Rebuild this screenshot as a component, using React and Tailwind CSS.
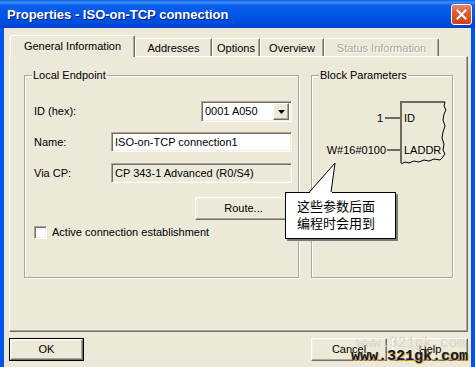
import { useState } from 'react'

const raised =
  'border border-t-white border-l-white border-r-[#716f64] border-b-[#716f64] shadow-[inset_-1px_-1px_0_#aca899,inset_1px_1px_0_#f1efe2]'
const sunken =
  'border border-t-[#aca899] border-l-[#aca899] border-r-white border-b-white shadow-[inset_1px_1px_0_#716f64,inset_-1px_-1px_0_#f1efe2]'
const etched = 'border border-[#aca899] shadow-[inset_1px_1px_0_#fff,1px_1px_0_#fff]'

function Tab({ label, width, active, disabled }) {
  if (active) {
    return (
      <div
        className={`relative z-10 h-[22px] -mb-px bg-[#ece9d8] border-l border-t border-r border-l-white border-t-white border-r-[#716f64] shadow-[inset_-1px_0_0_#aca899] rounded-t-[2px] flex justify-center pt-[4px] ${width}`}
      >
        {label}
      </div>
    )
  }
  return (
    <div
      className={`h-[18px] border-l border-t border-r border-l-white border-t-white border-r-[#716f64] shadow-[inset_-1px_0_0_#aca899] rounded-t-[2px] flex justify-center pt-[3px] ${width} ${
        disabled ? 'text-[#aca899] [text-shadow:1px_1px_0_#fff]' : ''
      }`}
    >
      {label}
    </div>
  )
}

function Button({ children, isDefault, className = '' }) {
  if (isDefault) {
    return (
      <div className={`h-[23px] border border-black ${className}`}>
        <div className={`h-full flex items-center justify-center ${raised}`}>{children}</div>
      </div>
    )
  }
  return <div className={`h-[23px] flex items-center justify-center ${raised} ${className}`}>{children}</div>
}

function BlockDiagram() {
  return (
    <svg className="block" width="139" height="75" viewBox="313 95 139 75">
      <g stroke="#6f6b5e" strokeWidth="2" fill="none">
        <path d="M402 163 L402 102 L446 102" />
        <path d="M386 118 L402 118" />
        <path d="M388 150 L402 150" />
      </g>
      <path
        d="M446 102 L445 106 L447 110 L445 114 L444 120 L446 126 L444 132 L443 138 L445 144 L444 150 L446 154 L443 158 L441 160"
        stroke="#000"
        strokeWidth="1"
        fill="none"
      />
      <path
        d="M402 164 L406 162 L410 163 L415 161 L420 162 L425 160 L430 161 L435 159 L441 160"
        stroke="#000"
        strokeWidth="1"
        fill="none"
      />
      <g fontFamily="Liberation Sans, Arial, sans-serif" fontSize="11" fill="#000">
        <text x="384" y="122" textAnchor="end">1</text>
        <text x="405" y="122">ID</text>
        <text x="387" y="154" textAnchor="end">W#16#0100</text>
        <text x="405" y="154">LADDR</text>
      </g>
    </svg>
  )
}

export default function App() {
  const [active, setActive] = useState(false)

  return (
    <div className="relative w-[475px] h-[367px] overflow-hidden bg-[#0055ea] flex flex-col font-['Liberation_Sans',Arial,sans-serif] text-[11px] leading-[13px] text-black">
      {/* Title bar */}
      <div className="h-[28px] shrink-0 flex items-center pl-[7px] pr-[3px] bg-[linear-gradient(to_bottom,#0a5ce9_0%,#3d8ff5_8%,#0a5fef_20%,#0055e5_55%,#004bdc_85%,#0040cc_100%)]">
        <div className="flex-1 text-white font-bold text-[13px] [text-shadow:1px_1px_0_#0a1f7a]">
          Properties - ISO-on-TCP connection
        </div>
        <div className="w-[21px] h-[21px] rounded-[3px] border border-white bg-[linear-gradient(to_bottom,#e8886a_0%,#e05a32_40%,#cc4218_100%)] flex items-center justify-center">
          <svg width="11" height="11" viewBox="0 0 11 11">
            <path d="M1.5 1.5 L9.5 9.5 M9.5 1.5 L1.5 9.5" stroke="#fff" strokeWidth="2" strokeLinecap="square" />
          </svg>
        </div>
      </div>

      {/* Client area */}
      <div className="flex-1 mx-[4px] bg-[#ece9d8] flex flex-col pl-[5px] pr-[3px] pt-[7px]">
        {/* Tabs */}
        <div className="h-[21px] flex items-end pl-[1px]">
          <Tab label="General Information" width="w-[125px]" active />
          <Tab label="Addresses" width="w-[77px]" />
          <Tab label="Options" width="w-[48px]" />
          <Tab label="Overview" width="w-[64px]" />
          <Tab label="Status Information" width="w-[115px]" disabled />
        </div>

        {/* Panel */}
        <div className="h-[276px] border border-l-white border-t-white border-r-[#716f64] border-b-[#716f64] shadow-[inset_-1px_-1px_0_#aca899] flex gap-[12px] pl-[14px] pt-[18px]">
          {/* Local Endpoint */}
          <div className={`relative w-[275px] h-[203px] pl-[9px] pr-[6px] pt-[25px] ${etched}`}>
            <div className="absolute -top-[7px] left-[7px] bg-[#ece9d8] px-[1px]">Local Endpoint</div>

            <div className="h-[21px] flex items-center justify-between">
              <span>ID (hex):</span>
              <div className={`w-[91px] h-[21px] bg-white flex items-center pl-[3px] pr-[2px] ${sunken}`}>
                <span className="flex-1">0001 A050</span>
                <div className={`w-[16px] h-[17px] bg-[#ece9d8] flex items-center justify-center ${raised}`}>
                  <svg width="7" height="4" viewBox="0 0 7 4">
                    <path d="M0 0 L7 0 L3.5 4 Z" fill="#000" />
                  </svg>
                </div>
              </div>
            </div>

            <div className="mt-[10px] h-[20px] flex items-center">
              <span className="w-[77px]">Name:</span>
              <div className={`flex-1 h-[20px] bg-white flex items-center pl-[3px] ${sunken}`}>
                ISO-on-TCP connection1
              </div>
            </div>

            <div className="mt-[11px] h-[20px] flex items-center">
              <span className="w-[77px]">Via CP:</span>
              <div className={`flex-1 h-[20px] bg-[#ece9d8] flex items-center pl-[3px] ${sunken}`}>
                CP 343-1 Advanced (R0/S4)
              </div>
            </div>

            <div className="mt-[14px] flex justify-end">
              <Button className="w-[97px]">Route...</Button>
            </div>

            <div className="mt-[6px] flex items-center gap-[5px]" onClick={() => setActive(!active)}>
              <div className={`w-[13px] h-[13px] bg-white flex items-center justify-center ${sunken}`}>
                {active && (
                  <svg width="7" height="7" viewBox="0 0 7 7">
                    <path d="M0 3 L2.5 5.5 L7 0.5" stroke="#000" strokeWidth="1.5" fill="none" />
                  </svg>
                )}
              </div>
              <span>Active connection establishment</span>
            </div>
          </div>

          {/* Block Parameters */}
          <div className={`relative w-[142px] h-[203px] pt-[19px] ${etched}`}>
            <div className="absolute -top-[7px] left-[7px] bg-[#ece9d8] px-[1px]">Block Parameters</div>
            <BlockDiagram />
          </div>
        </div>

        {/* Buttons */}
        <div className="mt-[6px] flex justify-between">
          <Button isDefault className="w-[75px]">OK</Button>
          <div className="flex gap-[5px]">
            <Button className="w-[76px]">Cancel</Button>
            <Button className="w-[76px]">Help</Button>
          </div>
        </div>
      </div>

      {/* Callout */}
      <svg className="absolute left-[300px] top-[160px]" width="40" height="34" viewBox="0 0 40 34">
        <path d="M35 3 L9 33 L31 33 Z" fill="#fff" />
        <path d="M9 32.5 L35 3 L31 32.5" stroke="#000" strokeWidth="1" fill="none" />
      </svg>
      <div className="absolute left-[285px] top-[192px] w-[111px] h-[47px] bg-white border border-black border-t-0 shadow-[2px_2px_0_#7a7a7a] pl-[11px] pt-[5px] font-['Noto_Sans_CJK_SC',sans-serif] text-[13px] leading-[17px]">
        <div className="absolute left-[-1px] top-0 w-[25px] h-px bg-black" />
        <div className="absolute left-[46px] top-0 right-[-1px] h-px bg-black" />
        <div>这些参数后面</div>
        <div>编程时会用到</div>
      </div>

      {/* Watermark */}
      <div className="absolute left-[356px] top-[337px] text-[14px] font-['Liberation_Mono',monospace] text-[#d9d6ca]">
        www.321gk.com
      </div>
      <div className="absolute left-[351px] top-[348px] text-[15px] leading-[17px] font-bold font-['Liberation_Mono',monospace] text-[#0d1c45] [text-shadow:1px_1px_0_#e0a020,0_0_1px_#f0c040]">
        www.321gk.com
      </div>
    </div>
  )
}
